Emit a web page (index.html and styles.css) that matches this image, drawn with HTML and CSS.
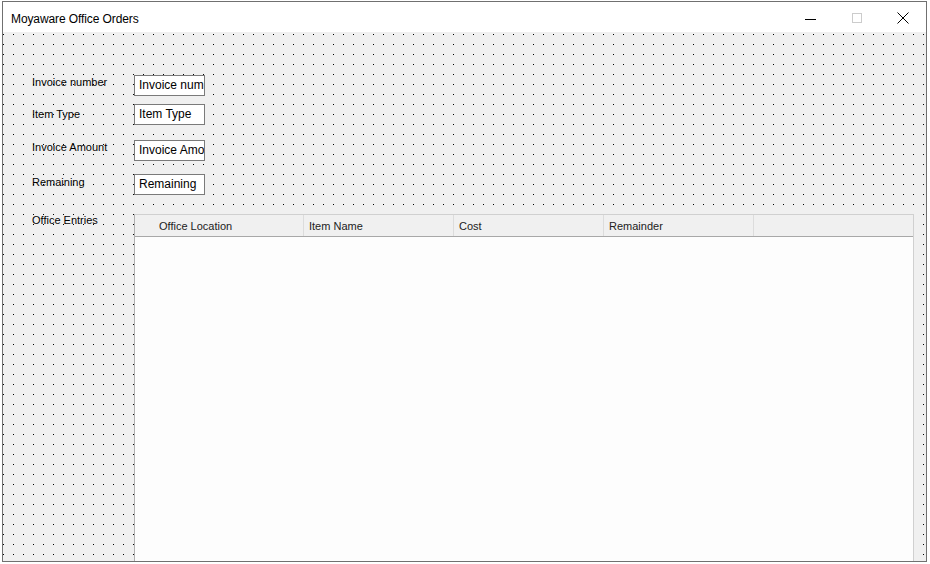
FILE: index.html
```html
<!DOCTYPE html>
<html lang="en">
<head>
  <meta charset="UTF-8" />
  <title>Moyaware Office Orders</title>
  <link rel="stylesheet" href="styles.css">
</head>
<body>
  <div class="window">
    <div class="titlebar">
      <span class="title">Moyaware Office Orders</span>
      <div class="controls">
        <span class="btn">
          <svg width="12" height="12" viewBox="0 0 12 12"><path d="M0 6.5h11" stroke="#000" stroke-width="1"/></svg>
        </span>
        <span class="btn">
          <svg width="12" height="12" viewBox="0 0 12 12"><rect x="1.5" y="1.5" width="9" height="9" fill="none" stroke="#cccccc" stroke-width="1"/></svg>
        </span>
        <span class="btn">
          <svg width="12" height="12" viewBox="0 0 12 12"><path d="M0.5 0.5l11 11M11.5 0.5l-11 11" stroke="#000" stroke-width="1"/></svg>
        </span>
      </div>
    </div>
    <div class="client">
      <div class="form">
        <label class="lbl l1">Invoice number</label>
        <div class="txt">Invoice number</div>
        <label class="lbl l2">Item Type</label>
        <div class="txt">Item Type</div>
        <label class="lbl l3">Invoice Amount</label>
        <div class="txt">Invoice Amount</div>
        <label class="lbl l4">Remaining</label>
        <div class="txt">Remaining</div>
        <label class="lbl l5">Office Entries</label>
        <div class="listview">
          <div class="lv-head">
            <div class="col first">Office Location</div>
            <div class="col">Item Name</div>
            <div class="col">Cost</div>
            <div class="col">Remainder</div>
          </div>
          <div class="lv-body"></div>
        </div>
      </div>
    </div>
  </div>
</body>
</html>
```

FILE: styles.css
```css
:root {
  --frame: #707070;
  --client-bg: #f0f0f0;
  --dot: #000;
  --text: #000;
}
* { box-sizing: border-box; margin: 0; padding: 0; }
body { background: #fff; font-family: "Liberation Sans", Arial, sans-serif; color: var(--text); padding: 1px 0 0 2px; }
.window { width: 925px; height: 561px; border: 1px solid var(--frame); display: flex; flex-direction: column; background: #fff; }
.titlebar { height: 30px; display: flex; align-items: center; justify-content: space-between; background: #fff; }
.title { font-size: 12px; padding-left: 8px; padding-top: 4px; letter-spacing: -0.1px; }
.controls { display: flex; height: 100%; padding-top: 2px; }
.btn { width: 46px; height: 100%; display: flex; align-items: center; justify-content: center; }
.btn svg { display: block; }
.controls .btn:first-child { margin-top: 1px; }
.client {
  flex: 1;
  overflow: hidden;
  background-color: var(--client-bg);
  background-image: conic-gradient(at 1px 1px, transparent 75%, var(--dot) 0);
  background-size: 10px 10px;
  background-position: 0 2px;
  padding: 43px 0 0 29px;
}
.form { display: grid; grid-template-columns: 102px 780px; grid-template-rows: 29px 36px 34px 40px auto; }
.lbl { font-size: 11px; line-height: 13px; }
.l1 { margin-top: 1px; }
.l2 { margin-top: 4px; }
.l3 { margin-top: 1px; }
.l4 { margin-top: 2px; }
.l5 { margin-top: 0; }
.txt { width: 71px; height: 21px; border: 1px solid #7a7a7a; background: #fff; font-size: 12px; line-height: 19px; padding-left: 4px; white-space: nowrap; overflow: hidden; }
.listview { width: 780px; height: 352px; border: 1px solid #d0d0d0; border-left-color: #b0b0b0; background: #fdfdfd; }
.lv-head { display: flex; height: 22px; background: #f0f0f0; border-bottom: 1px solid #a8a8a8; }
.col { width: 150px; border-right: 1px solid #dcdcdc; font-size: 11px; line-height: 21px; padding: 1px 0 0 5px; color: #222; }
.col.first { width: 169px; padding-left: 24px; }
```
